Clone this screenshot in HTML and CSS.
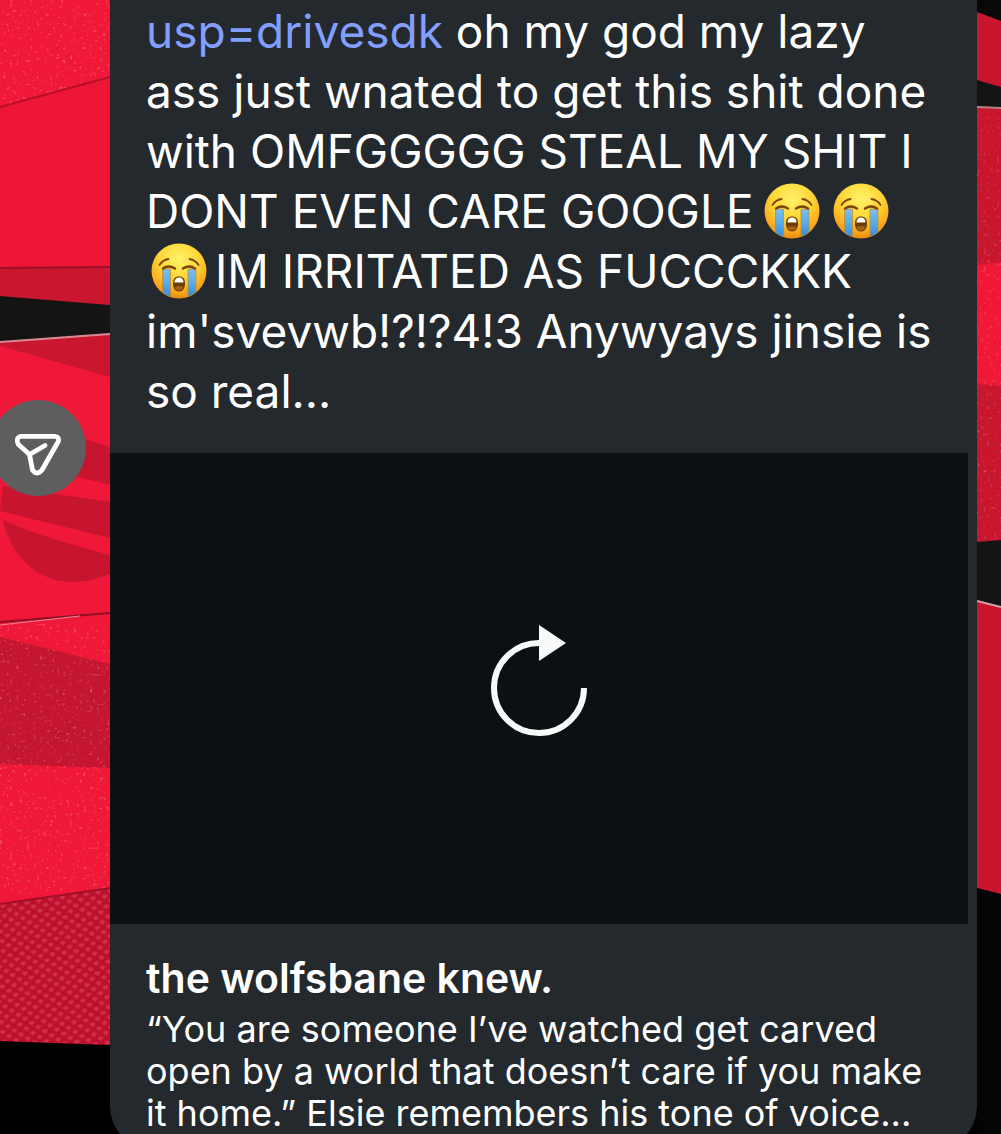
FILE: index.html
```html
<!DOCTYPE html>
<html lang="en">
<head>
    <meta charset="UTF-8">
    <meta name="viewport" content="width=device-width, initial-scale=1.0">
    <title>Chat</title>
    <link rel="stylesheet" href="styles.css">
</head>
<body>
    <!-- shared symbols and textures -->
    <svg class="defs" aria-hidden="true">
        <defs>
            <radialGradient id="face" cx="50%" cy="28%" r="72%">
                <stop offset="0" stop-color="#fff36b"/>
                <stop offset="0.5" stop-color="#ffd635"/>
                <stop offset="0.85" stop-color="#f9a51c"/>
                <stop offset="1" stop-color="#e98a10"/>
            </radialGradient>
            <linearGradient id="tear" x1="0" y1="0" x2="0" y2="1">
                <stop offset="0" stop-color="#7cc0ee"/>
                <stop offset="0.5" stop-color="#57a9e6"/>
                <stop offset="1" stop-color="#2f86dc"/>
            </linearGradient>
            <clipPath id="head"><circle cx="28" cy="28" r="27"/></clipPath>
            <symbol id="sob" viewBox="0 0 56 56">
                <circle cx="28" cy="28" r="27.5" fill="url(#face)"/>
                <g clip-path="url(#head)">
                    <path d="M11.500 26h8v30h-8zM37 26h8v30h-8z" fill="url(#tear)" stroke="#c98a2a" stroke-width="0.8"/>
                </g>
                <path d="M8.500 22q3-5 9-6M38.500 16q6 1 9 6" fill="none" stroke="#7a430a" stroke-width="1.800" stroke-linecap="round"/>
                <path d="M12 25.500q5.500-4 12 0M32 25.500q6.500-4 12 0" fill="none" stroke="#7a430a" stroke-width="2.400" stroke-linecap="round"/>
                <path d="M28 33.500c4 0 6 2.500 6 7s-2 8-6 8-6-3.500-6-8 2-7 6-7z" fill="#6d3c06"/>
                <path d="M23.500 39.500c0-3 1.500-5 4.500-5s4.500 2 4.500 5z" fill="#fff"/>
                <path d="M23.500 44q4.500-2 9 0-1 3.500-4.500 3.500t-4.500-3.500z" fill="#a35f14"/>
            </symbol>
            <pattern id="mesh" width="12" height="10" patternUnits="userSpaceOnUse" patternTransform="rotate(-8)">
                <rect width="12" height="10" fill="#bd102c"/>
                <path d="M1 0.500h4l1 2-3 2.500-3-2.500zM7 5.500h4l1 2-3 2.500-3-2.500z" fill="#d02f4a"/>
            </pattern>
            <filter id="grain" x="0" y="0" width="100%" height="100%">
                <feTurbulence type="fractalNoise" baseFrequency="0.3" numOctaves="2" seed="4"/>
                <feColorMatrix values="0 0 0 0 1  0 0 0 0 0.5  0 0 0 0 0.55  4 0 0 0 -2.5"/>
            </filter>
        </defs>
    </svg>

    <main class="chat">
        <aside class="gutter">
            <svg class="wallpaper" viewBox="0 0 110 1134" preserveAspectRatio="none" aria-hidden="true">
                <rect width="110" height="1134" fill="#f01838"/>
                <rect width="110" height="107" filter="url(#grain)" opacity="0.4"/>
                <path d="M0 107 110 77V267L0 269z" fill="#ee1636"/>
                <path d="M0 107 110 77" stroke="#b50e28" stroke-width="2"/>
                <path d="M0 268 110 267V305L0 296z" fill="#c8172f"/>
                <path d="M0 268 110 267" stroke="#9c0f26" stroke-width="2"/>
                <path d="M0 296 110 305V334L0 342z" fill="#141414"/>
                <path d="M0 342 110 334V377L0 346z" fill="#c8172f"/>
                <path d="M0 342 110 334" stroke="#d98a96" stroke-width="2"/>
                <!-- striped disc -->
                <path d="M70 434 110 447V485L70 475zM3 486 110 502V538L0 511zM2 519Q30 534 110 555V574Q82 586 55 580 15 568 2 519z" fill="#c8152f"/>
                <path d="M0 622 110 613" stroke="#8f1024" stroke-width="2"/>
                <path d="M0 625 80 616" stroke="#e98a98" stroke-width="1"/>
                <path d="M0 637 110 664V768L0 764z" fill="#c41630"/>
                <rect y="624" width="110" height="270" filter="url(#grain)" opacity="0.4"/>
                <path d="M0 904 110 888V1045L0 1041z" fill="url(#mesh)"/>
                <path d="M0 904 110 888" stroke="#a01028" stroke-width="2"/>
                <path d="M0 1041 110 1045V1134H0z" fill="#000"/>
            </svg>
            <button class="share" type="button" aria-label="Share">
                <svg viewBox="0 0 96 96" aria-hidden="true">
                    <path d="M31 36.300H65Q70 37 68 42L52 70Q47 76 42.500 70L39.500 54.500 28.500 44.500Q25 38 31 36.300zM39.500 54.500 55 45.500" fill="none" stroke="#fff" stroke-width="4.800" stroke-linecap="round" stroke-linejoin="round"/>
                </svg>
            </button>
        </aside>

        <article class="bubble">
            <p class="message">
                <a href="#">usp=drivesdk</a> oh my god my lazy<br>
                ass just wnated to get this shit done<br>
                with OMFGGGGG STEAL MY SHIT I<br>
                DONT EVEN CARE GOOGLE<svg class="emoji" role="img" aria-label="loudly crying face"><use href="#sob"/></svg><svg class="emoji" role="img" aria-label="loudly crying face"><use href="#sob"/></svg><br>
                <svg class="emoji line-start" role="img" aria-label="loudly crying face"><use href="#sob"/></svg>IM IRRITATED AS FUCCCKKK<br>
                im'svevwb!?!?4!3 Anywyays jinsie is<br>
                so real...
            </p>
            <div class="media">
                <button class="reload" type="button" aria-label="Reload">
                    <svg viewBox="0 0 96 112" aria-hidden="true">
                        <path d="M48 18A45 45 0 1 0 93 63" fill="none" stroke="#f8fafa" stroke-width="6"/>
                        <path d="M48 0 75 18 48 36z" fill="#f8fafa"/>
                    </svg>
                </button>
            </div>
            <div class="preview">
                <h2>the wolfsbane knew.</h2>
                <p>“You are someone I’ve watched get carved<br>
                open by a world that doesn’t care if you make<br>
                it home.” Elsie remembers his tone of voice...</p>
            </div>
        </article>

        <div class="gutter">
            <svg class="wallpaper" viewBox="0 0 24 1134" preserveAspectRatio="none" aria-hidden="true">
                <rect width="24" height="1134" fill="#c8162f"/>
                <path d="M0 0H24V21L0 12z" fill="#080808"/>
                <path d="M0 80 24 87V108L0 106z" fill="#141414"/>
                <path d="M0 107 24 108" stroke="#b78088" stroke-width="2"/>
                <path d="M0 265 24 262V386L0 384z" fill="#f01838"/>
                <rect y="110" width="24" height="430" filter="url(#grain)" opacity="0.3"/>
                <path d="M0 542 24 540V607L0 601z" fill="#141414"/>
                <path d="M0 601 24 607" stroke="#d0a0a8" stroke-width="2"/>
                <path d="M0 888 24 894V1134H0z" fill="#040404"/>
            </svg>
        </div>
    </main>
</body>
</html>
```
FILE: styles.css
```css
* {
    box-sizing: border-box;
}
body {
    margin: 0;
    background-color: #000;
    color: #fff;
    font-family: Inter, "Liberation Sans", sans-serif;
}
.defs {
    position: absolute;
    width: 0;
    height: 0;
}
.chat {
    display: grid;
    grid-template-columns: 110px minmax(0, 1fr) 24px;
    height: 100vh;
    overflow: hidden;
}
.gutter {
    position: relative;
    height: 100vh;
}
.wallpaper {
    display: block;
    width: 100%;
    height: 100%;
}
button {
    padding: 0;
    border: none;
    background: none;
    cursor: pointer;
}
.share {
    position: absolute;
    top: 400px;
    left: -10px;
    width: 96px;
    height: 96px;
    border-radius: 50%;
    background-color: #5e5e5e;
}
.share svg,
.reload svg {
    display: block;
    width: 100%;
}
.bubble {
    align-self: start;
    background-color: #24292d;
    border-radius: 0 0 44px 44px;
    overflow: hidden;
}
.message {
    margin: 0;
    padding: 1px 36px 32px;
    font-size: 46px;
    line-height: 60px;
    white-space: nowrap;
}
.message a {
    color: #829fff;
    text-decoration: none;
}
.emoji {
    width: 56px;
    height: 56px;
    margin: 0 3px 0 10px;
    vertical-align: -11px;
}
.emoji.line-start {
    margin: 0 8px 0 5px;
}
.media {
    display: flex;
    align-items: center;
    justify-content: center;
    margin-right: 9px;
    padding-bottom: 16px;
    aspect-ratio: 858 / 471;
    background-color: #0b1014;
}
.reload {
    width: 96px;
}
.preview {
    padding: 28px 36px 16px;
    white-space: nowrap;
}
.preview h2 {
    margin: 0 0 4px;
    font-size: 41px;
    font-weight: 600;
    line-height: 52px;
}
.preview p {
    margin: 0;
    font-size: 36px;
    line-height: 42px;
}
```
